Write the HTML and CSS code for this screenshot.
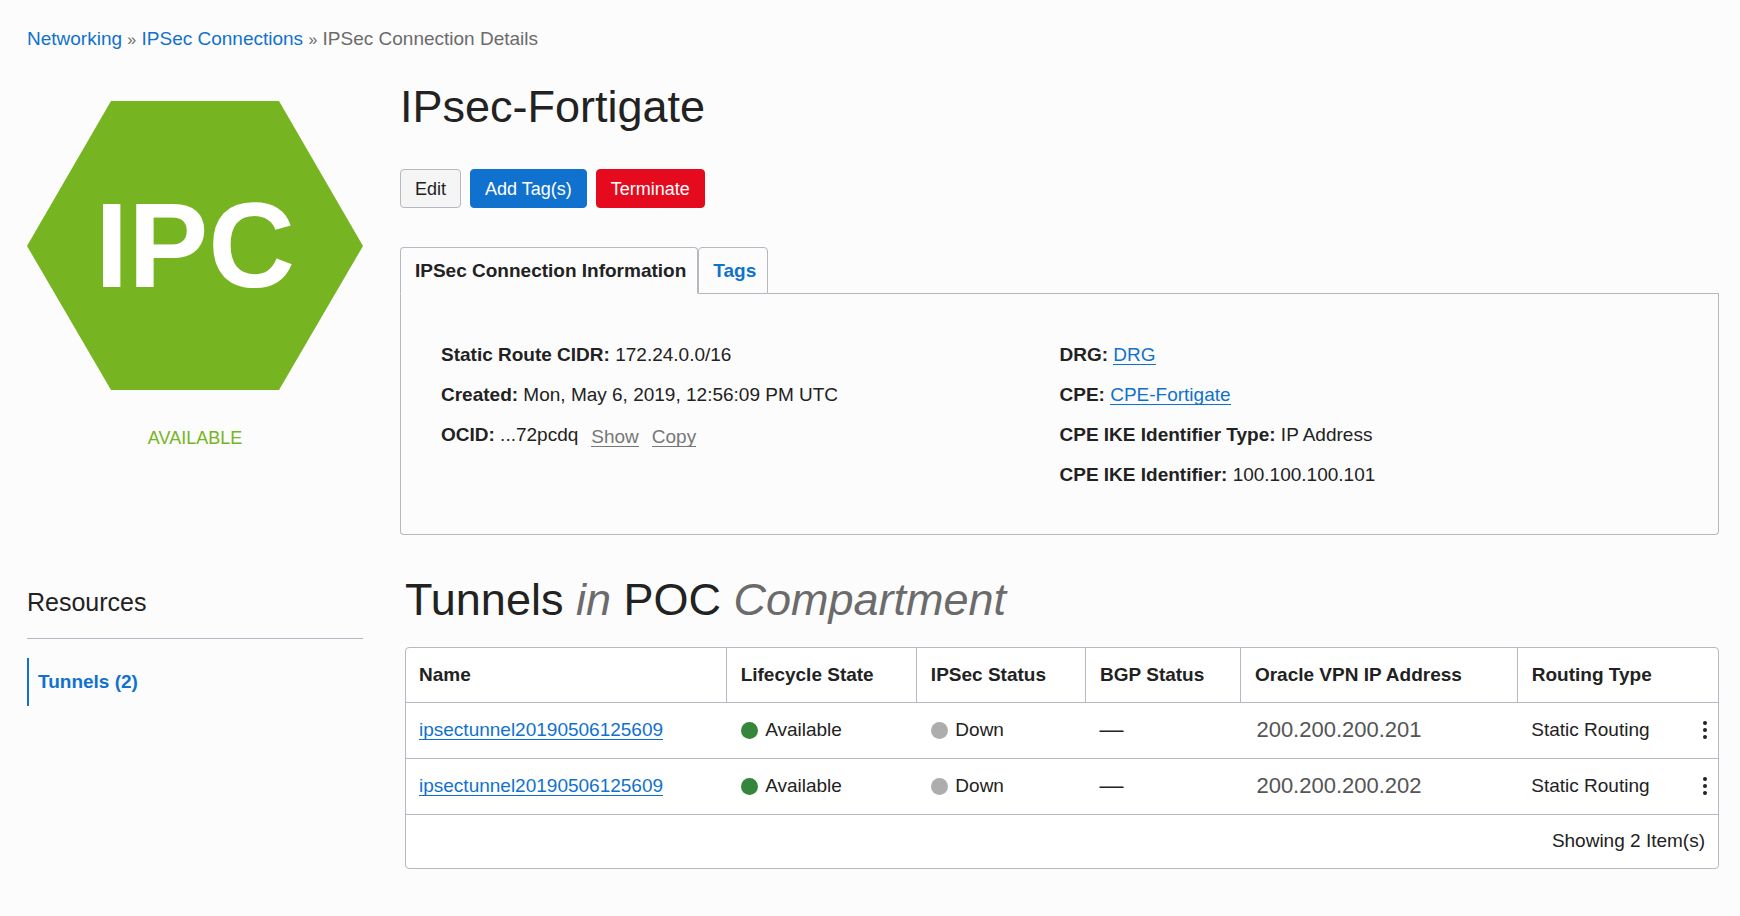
FILE: index.html
```html
<!DOCTYPE html>
<html lang="en">
<head>
<meta charset="utf-8">
<meta name="viewport" content="width=device-width, initial-scale=1">
<title>IPSec Connection Details</title>
<link rel="stylesheet" href="styles.css">
</head>
<body>
<nav class="breadcrumb" aria-label="Breadcrumb">
  <a href="#">Networking</a> <span class="sep">»</span> <a href="#">IPSec Connections</a> <span class="sep">»</span> <span>IPSec Connection Details</span>
</nav>
<div class="layout">
  <aside class="status">
    <svg class="hexagon" viewBox="0 0 336 289" role="img" aria-label="IPC">
      <polygon points="84,0 252,0 336,145 252,289 84,289 0,145" fill="#76b422"/>
      <text x="168" y="186" text-anchor="middle" class="hexagon-label">IPC</text>
    </svg>
    <p class="state">AVAILABLE</p>
  </aside>
  <main class="details">
    <h1 class="title">IPsec-Fortigate</h1>
    <div class="actions">
      <button type="button" class="btn">Edit</button>
      <button type="button" class="btn btn-primary">Add Tag(s)</button>
      <button type="button" class="btn btn-danger">Terminate</button>
    </div>
    <div class="tabs" role="tablist">
      <button type="button" class="tab tab-active" role="tab" aria-selected="true">IPSec Connection Information</button>
      <button type="button" class="tab" role="tab" aria-selected="false">Tags</button>
      <span class="tab-rule"></span>
    </div>
    <section class="panel">
      <div class="facts">
        <p><b>Static Route CIDR:</b> 172.24.0.0/16</p>
        <p><b>Created:</b> Mon, May 6, 2019, 12:56:09 PM UTC</p>
        <p class="ocid"><span><b>OCID:</b> ...72pcdq</span> <a class="minor" href="#">Show</a> <a class="minor" href="#">Copy</a></p>
      </div>
      <div class="facts">
        <p><b>DRG:</b> <a class="link" href="#">DRG</a></p>
        <p><b>CPE:</b> <a class="link" href="#">CPE-Fortigate</a></p>
        <p><b>CPE IKE Identifier Type:</b> IP Address</p>
        <p><b>CPE IKE Identifier:</b> 100.100.100.101</p>
      </div>
    </section>
  </main>
  <nav class="resources" aria-label="Resources">
    <h2 class="resources-title">Resources</h2>
    <a class="resource" href="#">Tunnels (2)</a>
  </nav>
  <section class="tunnels">
    <h2 class="title">Tunnels <em>in</em> POC <em>Compartment</em></h2>
    <div class="table-box">
      <table class="table">
        <colgroup>
          <col class="c-name"><col class="c-state"><col class="c-ipsec"><col class="c-bgp"><col class="c-ip"><col>
        </colgroup>
        <thead>
          <tr><th>Name</th><th>Lifecycle State</th><th>IPSec Status</th><th>BGP Status</th><th>Oracle VPN IP Address</th><th>Routing Type</th></tr>
        </thead>
        <tbody>
          <tr>
            <td><a class="link" href="#">ipsectunnel20190506125609</a></td>
            <td><span class="flag"><i class="dot dot-up"></i>Available</span></td>
            <td><span class="flag"><i class="dot"></i>Down</span></td>
            <td><span class="dash">—</span></td>
            <td class="ip">200.200.200.201</td>
            <td><div class="routing">Static Routing
              <button type="button" class="kebab" aria-label="Actions"><svg width="4" height="20" viewBox="0 0 4 20"><circle cx="2" cy="3" r="2"/><circle cx="2" cy="10" r="2"/><circle cx="2" cy="17" r="2"/></svg></button></div></td>
          </tr>
          <tr>
            <td><a class="link" href="#">ipsectunnel20190506125609</a></td>
            <td><span class="flag"><i class="dot dot-up"></i>Available</span></td>
            <td><span class="flag"><i class="dot"></i>Down</span></td>
            <td><span class="dash">—</span></td>
            <td class="ip">200.200.200.202</td>
            <td><div class="routing">Static Routing
              <button type="button" class="kebab" aria-label="Actions"><svg width="4" height="20" viewBox="0 0 4 20"><circle cx="2" cy="3" r="2"/><circle cx="2" cy="10" r="2"/><circle cx="2" cy="17" r="2"/></svg></button></div></td>
          </tr>
        </tbody>
        <tfoot>
          <tr><td colspan="6">Showing 2 Item(s)</td></tr>
        </tfoot>
      </table>
    </div>
  </section>
</div>
</body>
</html>
```
FILE: styles.css
```css
* { box-sizing: border-box; }

body {
  margin: 0;
  padding: 28px 21px 48px 27px;
  background: #fcfcfc;
  color: #222;
  font: 19px/22px "Liberation Sans", Arial, sans-serif;
}

h1, h2, p { margin: 0; font-weight: 400; }
a { color: #1072ce; text-decoration: none; }
button { font: inherit; cursor: pointer; }

.breadcrumb { color: #6b6b6b; }
.sep { font-size: 16px; }

.layout {
  display: grid;
  grid-template-columns: 336px minmax(0, 1fr);
  column-gap: 37px;
  padding-top: 31px;
}

.status { padding-top: 19px; text-align: center; }
.hexagon { display: block; width: 100%; }
.hexagon-label { fill: #fff; font-size: 120px; font-weight: 700; }
.state { padding-top: 37px; color: #76b422; font-size: 18px; }

.title { font-size: 45px; line-height: 50px; }
.title em { color: #6b6b6b; }

.actions { display: flex; gap: 9px; padding-top: 37px; }
.btn {
  height: 39px;
  padding: 0 14px;
  border: 1px solid #b4b8c1;
  border-radius: 4px;
  background: #f5f5f5;
  color: #222;
  font-size: 18px;
}
.btn-primary { border-color: #1072ce; background: #1072ce; color: #fff; }
.btn-danger { border-color: #e60a1e; background: #e60a1e; color: #fff; }

.tabs { display: flex; padding-top: 39px; }
.tab {
  height: 47px;
  padding: 0 11px 0 14px;
  border: 1px solid #b4b8c1;
  border-radius: 4px 4px 0 0;
  background: none;
  color: #1072ce;
  font-weight: 700;
}
.tab-active { border-bottom-color: transparent; color: #222; }
.tab-rule { flex: 1; border-bottom: 1px solid #b4b8c1; }

.panel {
  display: grid;
  grid-template-columns: 1fr 1fr;
  padding: 41px 40px 39px;
  border: 1px solid #b4b8c1;
  border-top: 0;
  border-radius: 0 0 4px 4px;
}
.facts p { line-height: 40px; }
.link { border-bottom: 1px solid #1072ce; line-height: 19px; display: inline-block; }
.ocid { display: flex; align-items: center; gap: 13px; }
.minor { margin-top: 4px; border-bottom: 1px solid #777; color: #777; line-height: 19px; }

.resources { padding-top: 53px; }
.resources-title {
  padding-bottom: 22px;
  border-bottom: 1px solid #b4b8c1;
  font-size: 25px;
  line-height: 28px;
}
.resource {
  display: block;
  margin-top: 19px;
  padding-left: 9px;
  border-left: 2px solid #1072ce;
  font-weight: 700;
  line-height: 48px;
}

.tunnels { padding: 40px 0 0 5px; }
.table-box {
  margin-top: 22px;
  border: 1px solid #b4b8c1;
  border-radius: 4px;
  background: #fff;
}
.table { width: 100%; border-collapse: collapse; table-layout: fixed; }
.c-name { width: 24.4%; }
.c-state { width: 14.5%; }
.c-ipsec { width: 12.9%; }
.c-bgp { width: 11.8%; }
.c-ip { width: 21.1%; }
.table th, .table td { height: 56px; padding: 0 11px 0 14px; text-align: left; border-bottom: 1px solid #b4b8c1; }
.table th:first-child, .table td:first-child { padding-left: 13px; }
.table th { height: 54px; }
.table th + th { border-left: 1px solid #b4b8c1; }
.table tfoot td { height: 54px; padding-right: 13px; border-bottom: 0; text-align: right; }
.table .ip { padding-left: 16px; color: #555; font-size: 22px; }
.flag { display: flex; align-items: center; gap: 7px; }
.dot { width: 17px; height: 17px; margin-left: 1px; border-radius: 50%; background: #adadad; }
.dot-up { background: #35863a; }
.dash { font-size: 24px; }
.routing { display: flex; align-items: center; justify-content: space-between; }
.kebab { display: flex; padding: 0; border: 0; background: none; fill: #222; }
.kebab svg { display: block; }
```
